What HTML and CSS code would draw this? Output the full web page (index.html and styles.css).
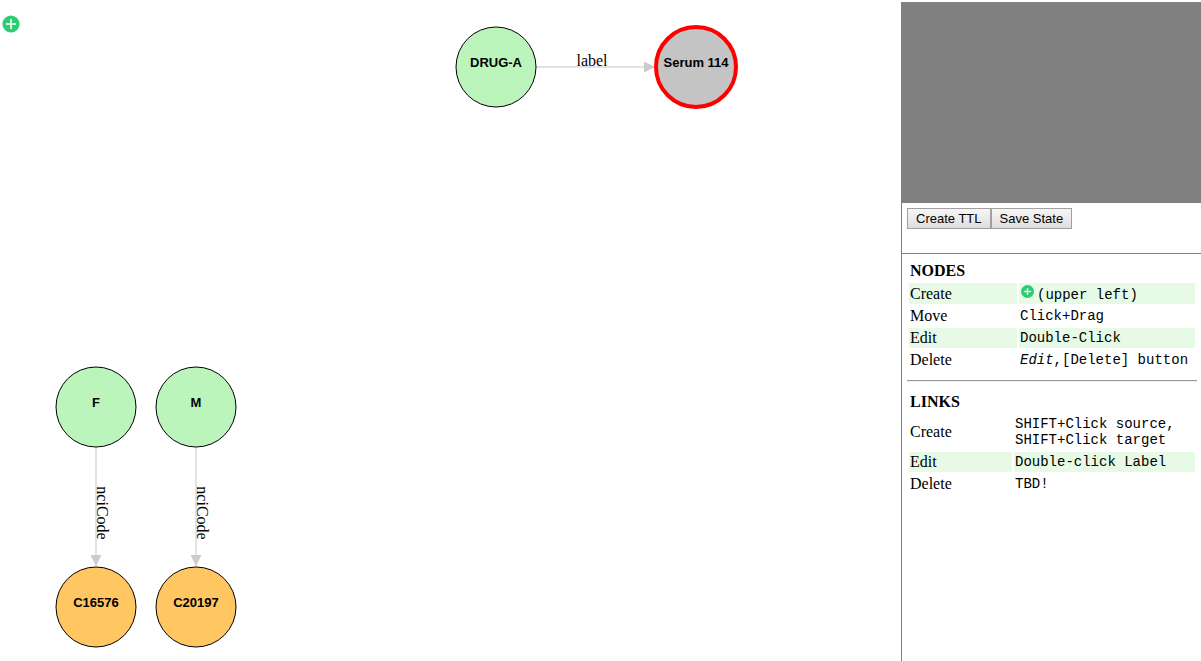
FILE: index.html
```html
<!DOCTYPE html>
<html lang="en">
<head>
<meta charset="utf-8">
<title>Graph editor</title>
<link rel="stylesheet" href="styles.css">
</head>
<body>
<main class="graph">
  <button class="add-node" type="button" aria-label="Create node">
    <svg class="plus" viewBox="0 0 18 18" aria-hidden="true"><circle class="plus-disc" cx="9" cy="9" r="8.6"/><path class="plus-sign" d="M9 4v10M4 9h10"/></svg>
  </button>
  <svg class="canvas" role="img" aria-label="Node graph">
    <defs>
      <marker id="arrow" viewBox="0 0 10 10" refX="10" refY="5" markerWidth="11" markerHeight="11" markerUnits="userSpaceOnUse" orient="auto"><path class="arrow-head" d="M0 0L10 5L0 10z"/></marker>
    </defs>
    <g class="links">
      <path class="link" d="M536 67H655" marker-end="url(#arrow)"/>
      <path class="link" d="M96 447V566" marker-end="url(#arrow)"/>
      <path class="link" d="M196 447V566" marker-end="url(#arrow)"/>
      <text class="link-label" x="592" y="66">label</text>
      <text class="link-label" transform="translate(97 513) rotate(90)">nciCode</text>
      <text class="link-label" transform="translate(197 513) rotate(90)">nciCode</text>
    </g>
    <g class="node green" transform="translate(496 67)"><circle r="40"/><text y="0">DRUG-A</text></g>
    <g class="node selected" transform="translate(696 67)"><circle r="40"/><text y="0">Serum 114</text></g>
    <g class="node green" transform="translate(96 407)"><circle r="40"/><text y="0">F</text></g>
    <g class="node green" transform="translate(196 407)"><circle r="40"/><text y="0">M</text></g>
    <g class="node orange" transform="translate(96 607)"><circle r="40"/><text y="0">C16576</text></g>
    <g class="node orange" transform="translate(196 607)"><circle r="40"/><text y="0">C20197</text></g>
  </svg>
</main>
<aside class="sidebar">
  <div class="info"></div>
  <div class="actions"><button class="action" type="button">Create TTL</button><button class="action" type="button">Save State</button></div>
  <div class="help">
    <table class="help-table">
      <colgroup><col class="nodes-name"><col></colgroup>
      <tr><th colspan="2">NODES</th></tr>
      <tr class="shaded icon-row"><td>Create</td><td class="keys"><svg class="plus plus-small" viewBox="0 0 18 18" aria-hidden="true"><circle class="plus-disc" cx="9" cy="9" r="9"/><path class="plus-sign" d="M9 4v10M4 9h10"/></svg>(upper left)</td></tr>
      <tr><td>Move</td><td class="keys">Click+Drag</td></tr>
      <tr class="shaded"><td>Edit</td><td class="keys">Double-Click</td></tr>
      <tr><td>Delete</td><td class="keys"><em>Edit</em>,[Delete] button</td></tr>
    </table>
    <hr class="rule">
    <table class="help-table">
      <colgroup><col class="links-name"><col></colgroup>
      <tr><th colspan="2">LINKS</th></tr>
      <tr class="two-line"><td>Create</td><td class="keys">SHIFT+Click source,<br>SHIFT+Click target</td></tr>
      <tr class="shaded"><td>Edit</td><td class="keys">Double-click Label</td></tr>
      <tr><td>Delete</td><td class="keys">TBD!</td></tr>
    </table>
  </div>
</aside>
</body>
</html>
```
FILE: styles.css
```css
* { box-sizing: border-box; }
body {
  margin: 0;
  min-height: 100vh;
  display: flex;
  background: #fff;
  color: #000;
  font: 16px/18px "Liberation Serif", "Times New Roman", serif;
}
.graph { position: relative; flex: 1; min-width: 0; display: flex; }
.canvas { flex: 1; min-width: 0; }
.add-node {
  position: absolute;
  top: 15px;
  left: 2px;
  padding: 0;
  border: 0;
  background: none;
  line-height: 0;
  cursor: pointer;
}
.plus { width: 18px; height: 18px; }
.plus-small { width: 13px; height: 13px; margin: 0 3px 1px 1px; }
.plus-disc { fill: #2ecc71; }
.plus-sign { fill: none; stroke: #d5f5e3; stroke-width: 2; }

.link { fill: none; stroke: #e3e3e3; stroke-width: 2; }
.arrow-head { fill: #ccc; }
.link-label { text-anchor: middle; }
.node circle { stroke: #000; stroke-width: 1; }
.node text { font: bold 13px "Liberation Sans", Arial, sans-serif; text-anchor: middle; }
.green circle { fill: #bbf5bb; }
.orange circle { fill: #ffc661; }
.selected circle { fill: #c4c4c4; stroke: #f00; stroke-width: 4; }

.sidebar { flex: 0 0 300px; padding-top: 2px; display: flex; flex-direction: column; }
.info { height: 201px; background: #808080; }
.actions {
  display: flex;
  align-items: flex-start;
  height: 50px;
  padding: 5px;
  border-left: 1px solid #808080;
}
.action {
  height: 21px;
  padding: 0 8px;
  border: 1px solid #a0a0a0;
  background: linear-gradient(#f6f6f6, #dedede);
  color: #000;
  font: 13px "Liberation Sans", Arial, sans-serif;
  white-space: nowrap;
}
.help {
  flex: 1;
  padding: 5px 4px 5px 5px;
  border-left: 1px solid #808080;
  border-top: 1px solid #808080;
}
.help-table { width: 100%; table-layout: fixed; border-spacing: 2px; }
.help-table th, .help-table td { padding: 1px; text-align: left; }
.nodes-name { width: 108px; }
.links-name { width: 103px; }
.shaded td { background: #e6fae6; }
.icon-row { height: 21px; }
.two-line { height: 36px; }
.help-table .keys {
  font: 14px/16px "Liberation Mono", "Courier New", monospace;
  white-space: nowrap;
}
.rule {
  margin: 8px 0;
  border: 0;
  border-top: 1px solid #9a9a9a;
  border-bottom: 1px solid #eee;
}
```
